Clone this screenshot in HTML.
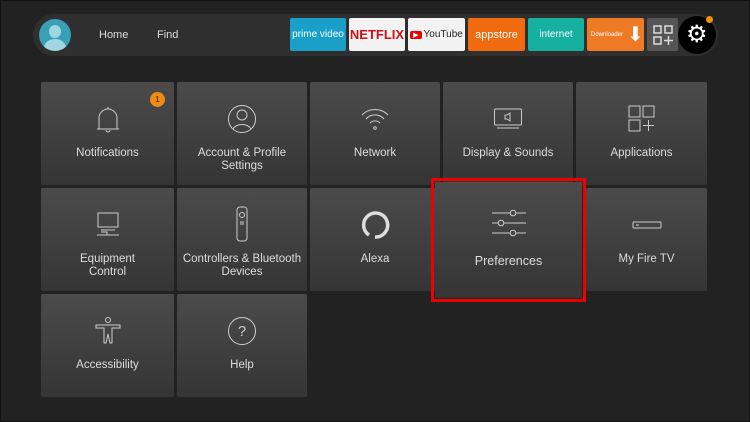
<!DOCTYPE html>
<html><head><style>
body{margin:0;width:750px;height:422px;background:#222;overflow:hidden;font-family:"Liberation Sans",sans-serif;position:relative}
.frame{position:absolute;left:0;top:0;width:748px;height:420px;border:1px solid #111}
.bar{position:absolute;left:33px;top:14px;width:685px;height:42px;border-radius:21px;background:#2f2f2f}
.t{position:absolute;width:133px;height:103px;background:linear-gradient(#4b4b4b,#353535);border-radius:2px;color:#ddd;font-size:11.5px;text-align:center}
.t svg{position:absolute;left:50%;transform:translateX(-50%);top:22px}
.t .l{position:absolute;left:0;right:0;top:65px;line-height:13px}
.app{position:absolute;top:18px;height:33px;border-radius:2px;font-size:11px;display:flex;align-items:center;justify-content:center}
</style></head><body>
<div class="frame"></div>
<div class="bar"></div>
<div style="position:absolute;left:39px;top:19px;width:32px;height:32px;border-radius:50%;background:#3aa0b8;overflow:hidden"><div style="position:absolute;left:10px;top:6px;width:12px;height:13px;border-radius:50%;background:#9fd6e0"></div><div style="position:absolute;left:5px;top:20px;width:22px;height:18px;border-radius:50%;background:#9fd6e0"></div></div>
<div style="position:absolute;left:99px;top:29px;color:#ddd;font-size:11px">Home</div>
<div style="position:absolute;left:157px;top:29px;color:#ddd;font-size:11px">Find</div>
<div class="app" style="left:290px;width:56px;background:#1aa0c8;color:#fff;font-size:10px">prime video</div>
<div class="app" style="left:349px;width:56px;background:#f2f2f2;color:#d0101a;font-weight:bold;font-size:13px">NETFLIX</div>
<div class="app" style="left:408px;width:57px;background:#f2f2f2;color:#222;font-size:10px"><span style="background:#e00;color:#fff;border-radius:2px;padding:0 3px;font-size:7px;margin-right:2px">▶</span>YouTube</div>
<div class="app" style="left:468px;width:57px;background:#f06a10;color:#fff">appstore</div>
<div class="app" style="left:528px;width:56px;background:#16b0a0;color:#fff;font-size:10px">internet</div>
<div class="app" style="left:587px;width:57px;background:#ee7a26;color:#fff;font-size:6px;justify-content:flex-start;padding-left:4px;box-sizing:border-box">Downloader<span style="font-size:20px;margin-left:4px">⬇</span></div>
<div class="app" style="left:647px;width:31px;background:#555"><svg width="20" height="20" fill="none" stroke="#ddd" stroke-width="1.5"><rect x="1" y="1" width="7" height="7"/><rect x="12" y="1" width="7" height="7"/><rect x="1" y="12" width="7" height="7"/><path d="M15.5 11v9M11 15.5h9"/></svg></div>
<div style="position:absolute;left:678px;top:16px;width:38px;height:38px;border-radius:50%;background:#000"></div>
<div style="position:absolute;left:686px;top:20px;color:#fff;font-size:24px;line-height:30px">⚙</div>
<div style="position:absolute;left:706px;top:16px;width:7px;height:7px;border-radius:50%;background:#f39200"></div>

<div class="t" style="left:41px;top:82px"><svg width="30" height="30" fill="none" stroke="#ccc" stroke-width="1"><path d="M6 25V14a9 9 0 0 1 18 0v11zM4 25h22M15 3v2M13 26a2 2 0 0 0 4 0"/></svg><div class="l">Notifications</div><div style="position:absolute;left:109px;top:10px;width:15px;height:15px;border-radius:50%;background:#f08a10;color:#222;font-size:8px;line-height:15px">1</div></div>
<div class="t" style="left:177px;top:82px;width:130px"><svg width="30" height="30" fill="none" stroke="#ccc" stroke-width="1"><circle cx="15" cy="15" r="13.5"/><circle cx="15" cy="11" r="5"/><path d="M6 25a10 8 0 0 1 18 0"/></svg><div class="l">Account &amp; Profile<br>Settings</div></div>
<div class="t" style="left:310px;top:82px;width:130px"><svg width="30" height="30" fill="none" stroke="#ccc" stroke-width="1"><path d="M2 11a18 18 0 0 1 26 0M6 15a12 12 0 0 1 18 0M10 19a7 7 0 0 1 10 0"/><circle cx="15" cy="24" r="1.3"/></svg><div class="l">Network</div></div>
<div class="t" style="left:443px;top:82px;width:130px"><svg width="30" height="30" fill="none" stroke="#ccc" stroke-width="1"><rect x="1.5" y="5" width="27" height="16" rx="1"/><path d="M4 24h22M12 11h2l3-2v8l-3-2h-2z"/></svg><div class="l">Display &amp; Sounds</div></div>
<div class="t" style="left:576px;top:82px;width:131px"><svg width="30" height="30" fill="none" stroke="#ccc" stroke-width="1"><rect x="2" y="2" width="11" height="11"/><rect x="16" y="2" width="11" height="11"/><rect x="2" y="16" width="11" height="11"/><path d="M21.5 16v11M16 21.5h11"/></svg><div class="l">Applications</div></div>

<div class="t" style="left:41px;top:188px"><svg width="30" height="30" fill="none" stroke="#ccc" stroke-width="1"><rect x="5" y="3" width="20" height="14"/><path d="M8 20h14M4 25h22M8 22h6v3"/></svg><div class="l">Equipment<br>Control</div></div>
<div class="t" style="left:177px;top:188px;width:130px"><svg width="30" height="36" fill="none" stroke="#ccc" stroke-width="1" style="top:18px"><rect x="10" y="1" width="10" height="34" rx="3"/><circle cx="15" cy="9" r="2.5"/><path d="M13 16h4M13 18h4"/></svg><div class="l">Controllers &amp; Bluetooth<br>Devices</div></div>
<div class="t" style="left:310px;top:188px;width:130px"><svg width="30" height="30" fill="none" stroke="#ddd" stroke-width="3.5"><path d="M9 25A12 12 0 1 1 15 27"/></svg><div class="l">Alexa</div></div>
<div style="position:absolute;left:431px;top:178px;width:149px;height:118px;border:3px solid #e00"></div>
<div class="t" style="left:435px;top:182px;width:147px;height:116px;border-radius:0"><svg width="34" height="30" fill="none" stroke="#ccc" stroke-width="1" style="top:26px"><path d="M0 5h34M0 15h34M0 25h34"/><circle cx="21" cy="5" r="2.8" fill="#444"/><circle cx="9" cy="15" r="2.8" fill="#444"/><circle cx="21" cy="25" r="2.8" fill="#444"/></svg><div class="l" style="top:73px;font-size:12.5px">Preferences</div></div>
<div class="t" style="left:586px;top:188px;width:121px"><svg width="30" height="30" fill="none" stroke="#ccc" stroke-width="1"><rect x="1" y="12" width="28" height="6" rx="1"/><path d="M4 15h3"/></svg><div class="l">My Fire TV</div></div>

<div class="t" style="left:41px;top:294px"><svg width="30" height="30" fill="none" stroke="#ccc" stroke-width="1"><circle cx="15" cy="4" r="2.5"/><path d="M3 9h24v3h-8v15h-2l-2-9-2 9h-2V12H3z"/></svg><div class="l">Accessibility</div></div>
<div class="t" style="left:177px;top:294px;width:130px"><svg width="30" height="30" fill="none" stroke="#ccc" stroke-width="1"><circle cx="15" cy="15" r="13.5"/><text x="15" y="20" font-size="15" fill="#ccc" stroke="none" text-anchor="middle" font-family="Liberation Sans">?</text></svg><div class="l">Help</div></div>
</body></html>
